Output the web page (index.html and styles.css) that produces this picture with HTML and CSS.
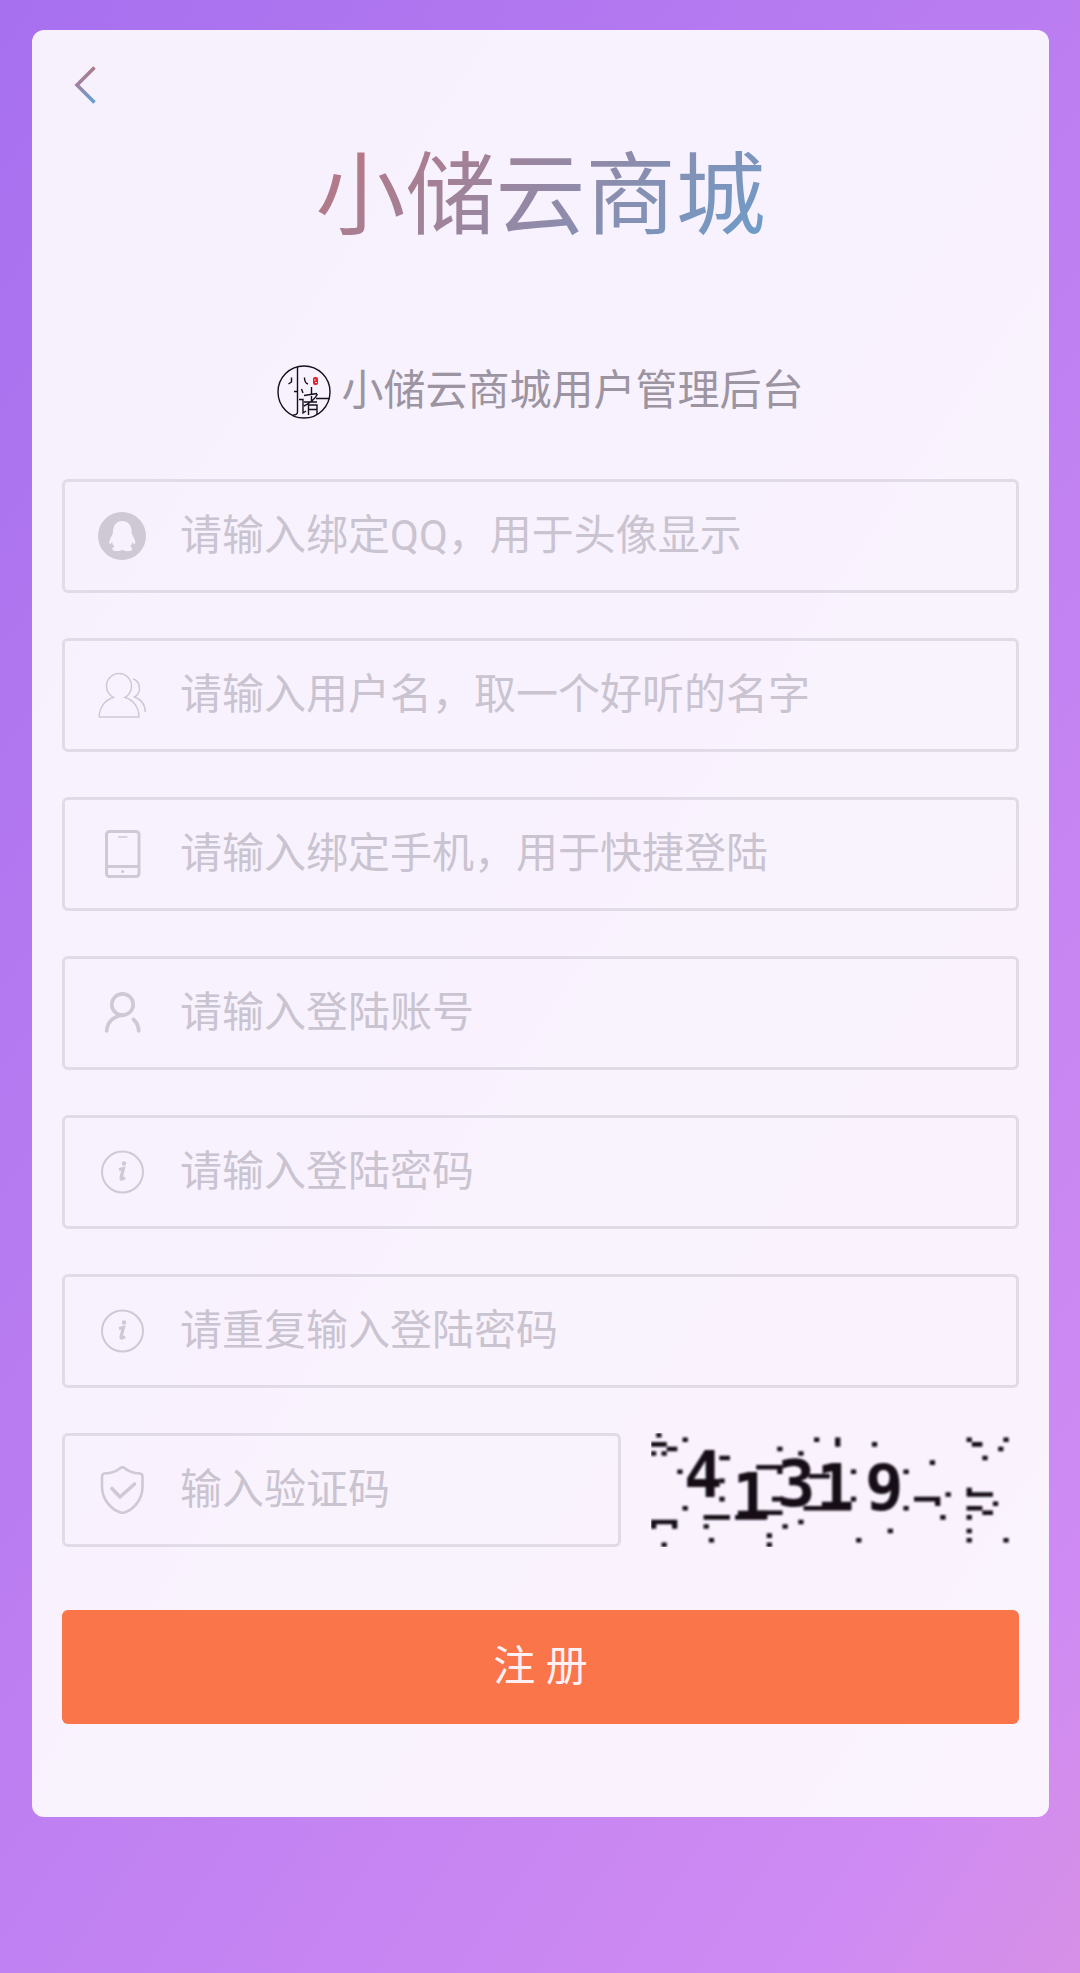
FILE: index.html
```html
<!DOCTYPE html>
<html lang="zh-CN">
<head>
    <meta charset="UTF-8">
    <meta name="viewport" content="width=device-width, initial-scale=1">
    <title>小储云商城</title>
    <link rel="stylesheet" href="styles.css">
</head>
<body>
    <div class="card">
        <a class="back" href="#" aria-label="返回">
            <svg width="24" height="40" viewBox="0 0 24 40">
                <defs>
                    <linearGradient id="backColor" x1="0" y1="0" x2="0" y2="1">
                        <stop offset="0" stop-color="#ad7a8b"/>
                        <stop offset="0.5" stop-color="#a083a0"/>
                        <stop offset="1" stop-color="#5ea2d8"/>
                    </linearGradient>
                </defs>
                <path d="M20.500 2.500L3 20L20.500 37.500" fill="none" stroke="url(#backColor)" stroke-width="3.600"/>
            </svg>
        </a>

        <h1 class="title"><span>小储云商城</span></h1>

        <div class="subtitle">
            <svg class="logo" width="54" height="54" viewBox="0 0 54 54" fill="none" stroke="#17101c" stroke-width="1.400">
                <circle cx="27" cy="27" r="26"/>
                <path d="M20.500 2V47Q20.500 50 16 50M14.500 12.500V17L11.500 19M27.500 12.500Q27.500 18 31 19M17 26.500H20.500"/>
                <path d="M24.500 24L26 28M22 34.500H26V48L29 46M27 30.500L40 28.500M34.500 22V36M27 37H40M40.500 29Q37 36 27 41M31.500 50V40H40V50M31.500 44.500H40M39 33.500H53"/>
                <rect x="36" y="12" width="5" height="8" rx="2" fill="#e0202c" stroke="none"/>
                <path d="M37 15H39M38 17.500H40" stroke="#fff" stroke-width="0.800"/>
            </svg>
            <span>小储云商城用户管理后台</span>
        </div>

        <form>
            <label class="field">
                <svg class="icon" viewBox="0 0 48 48">
                    <path fill="currentColor" fill-rule="evenodd" d="M24 0a24 24 0 1 0 0 48a24 24 0 1 0 0-48zM24.300 9c-6 0-9 4.500-9.400 10.500c0 1.500-.2 2.500-1 4c-1.800 3-2.800 5.500-2.500 8c.3 1.500 1.700.3 2.700-1.500c.3 1.800 1.200 3.500 2.400 4.800c-1.600.4-2.200 1.400-2.200 2.200c0 2.800 7.700 2.700 10 .7c2.300 2 10 2.100 10-.7c0-.8-.6-1.800-2.200-2.200c1.200-1.300 2.100-3 2.400-4.800c1 1.800 2.400 3 2.700 1.500c.3-2.500-.7-5-2.500-8c-.8-1.500-1-2.500-1-4c-.4-6-3.400-10.500-9.400-10.500z"/>
                </svg>
                <input type="text" placeholder="请输入绑定QQ，用于头像显示" aria-label="绑定QQ">
            </label>

            <label class="field">
                <svg class="icon" viewBox="0 0 48 48" fill="none" stroke="currentColor" stroke-width="1.500">
                    <path d="M15.500 26.500C11 24 8.500 20 8.500 15A12.500 12.500 0 0 1 33.500 15C33.500 20 31 24 27 26.500C36 29 41 37 41 46H1.200C1.200 37 6.500 29 15.500 26.500z"/>
                    <path d="M35 8C39 8.500 41.500 13 41.500 17.500C41.500 21 40 24 36.500 26C43 28.500 47.300 33 47.300 41"/>
                </svg>
                <input type="text" placeholder="请输入用户名，取一个好听的名字" aria-label="用户名">
            </label>

            <label class="field">
                <svg class="icon" viewBox="0 0 48 48" fill="none" stroke="currentColor" stroke-width="3">
                    <rect x="8.500" y="1.500" width="32.500" height="45" rx="3"/>
                    <path d="M8.500 36.500H41"/>
                    <path d="M20 7H29.500" stroke-width="1.500"/>
                    <circle cx="24.700" cy="41.500" r="1.600" fill="currentColor" stroke="none"/>
                </svg>
                <input type="tel" placeholder="请输入绑定手机，用于快捷登陆" aria-label="绑定手机">
            </label>

            <label class="field">
                <svg class="icon" viewBox="0 0 48 48" fill="none" stroke="currentColor" stroke-width="3.700" stroke-linecap="round">
                    <circle cx="24.500" cy="15.500" r="10.700"/>
                    <path d="M8.700 42C9 33.500 15.500 26.800 24.500 26.500M35.500 30.500C39 33.500 40.500 37 40.700 42"/>
                </svg>
                <input type="text" placeholder="请输入登陆账号" aria-label="登陆账号">
            </label>

            <label class="field">
                <svg class="icon" viewBox="0 0 48 48" fill="none" stroke="currentColor" stroke-width="2">
                    <circle cx="24.500" cy="24" r="20.500"/>
                    <circle cx="26" cy="15.500" r="2.200" fill="currentColor" stroke="none"/>
                    <path d="M21 21.500L25.500 20.500L23 30Q23 32.500 27 29.500" stroke-width="3.200"/>
                </svg>
                <input type="password" placeholder="请输入登陆密码" aria-label="登陆密码">
            </label>

            <label class="field">
                <svg class="icon" viewBox="0 0 48 48" fill="none" stroke="currentColor" stroke-width="2">
                    <circle cx="24.500" cy="24" r="20.500"/>
                    <circle cx="26" cy="15.500" r="2.200" fill="currentColor" stroke="none"/>
                    <path d="M21 21.500L25.500 20.500L23 30Q23 32.500 27 29.500" stroke-width="3.200"/>
                </svg>
                <input type="password" placeholder="请重复输入登陆密码" aria-label="重复登陆密码">
            </label>

            <div class="code-row">
                <label class="field">
                    <svg class="icon" viewBox="0 0 48 48" fill="none" stroke="currentColor" stroke-width="2.600" stroke-linejoin="round">
                        <path d="M22.500 2Q24.500 .6 26.500 2Q32 7 42 7.500Q44.500 8 44.500 10.500V21C44.500 33 36 43.500 26.500 46.500Q24.500 47 22.500 46.500C13 43.500 4 33 4 21V10.500Q4 8 6.500 7.500Q17 7 22.500 2z"/>
                        <path d="M14 22.500L22 31L36.500 18" stroke-width="3.600" stroke-linecap="round"/>
                    </svg>
                    <input type="text" placeholder="输入验证码" aria-label="验证码">
                </label>

                <!-- captcha: digits over pixel noise -->
                <svg class="captcha" viewBox="0 0 368 114" fill="#120b18">
                    <filter id="soft"><feGaussianBlur stdDeviation="0.8"/></filter>
                    <g filter="url(#soft)">
                        <path transform="scale(5.260 4.560)" d="M1 0h1v1h-1zM6 1h1v1h-1zM0 2h3v1h-3zM3 3h2v1h-2zM0 4h1v1h-1zM2 4h1v1h-1zM31 1h1v1h-1zM35 1h1v2h-1zM42 2h1v1h-1zM24 3h1v1h-1zM28 4h1v1h-1zM60 1h1v1h-1zM61 2h2v1h-2zM67 1h1v1h-1zM66 3h1v1h-1zM63 5h1v1h-1zM53 6h1v1h-1zM48 8h1v1h-1zM38 8h1v1h-1zM5 8h1v1h-1zM56 13h1v1h-1zM50 14h5v1h-5zM54 15h1v1h-1zM60 12h1v1h-1zM60 13h5v1h-5zM65 15h1v1h-1zM60 16h3v1h-3zM63 17h2v1h-2zM60 18h1v1h-1zM60 21h1v1h-1zM60 23h1v1h-1zM67 23h1v1h-1zM55 18h1v1h-1zM48 16h1v1h-1zM38 14h1v1h-1zM45 21h1v1h-1zM39 23h1v1h-1zM28 19h1v1h-1zM25 20h1v1h-1zM22 22h1v1h-1zM22 24h1v1h-1zM6 16h1v1h-1zM13 14h1v1h-1zM10 18h5v1h-5zM16 18h6v1h-6zM20 17h5v1h-5zM10 20h1v1h-1zM11 23h1v1h-1zM2 24h1v1h-1zM0 19h5v1h-5zM0 20h1v1h-1zM4 20h1v1h-1zM13 5h2v1h-2zM20 7h5v1h-5zM24 8h1v1h-1zM30 9h4v1h-4zM29 16h9v1h-9zM13 10h1v1h-1zM23 14h2v1h-2z"/>
                        <text class="digits"><tspan x="33" y="64">4</tspan><tspan x="81" y="86">1</tspan><tspan x="126" y="73">3</tspan><tspan x="165" y="77">1</tspan><tspan x="214" y="77">9</tspan></text>
                    </g>
                </svg>
            </div>

            <button class="submit" type="submit">注 册</button>
        </form>
    </div>
</body>
</html>
```

FILE: styles.css
```css
* {
    box-sizing: border-box;
}

body {
    margin: 0;
    min-height: 100vh;
    padding: 30px 31px 30px 32px;
    font-family: Roboto, "Noto Sans CJK SC", sans-serif;
    background: linear-gradient(124deg, #a770ef 0%, #cf8bf3 89%, #d690e6 100%);
}

.card {
    padding: 35px 30px 93px;
    border-radius: 12px;
    background: rgba(255, 255, 255, 0.9);
}

.back {
    display: block;
    width: 48px;
    height: 79px;
    padding-left: 12px;
}

.back svg {
    display: block;
}

.title {
    margin: 0;
    font-size: 90px;
    font-weight: 400;
    line-height: 106px;
    text-align: center;
}

.title span {
    color: transparent;
    background: linear-gradient(135deg, #bb7580, #6c9dcb);
    -webkit-background-clip: text;
    background-clip: text;
}

.subtitle {
    display: flex;
    justify-content: center;
    gap: 10px;
    margin-top: 111px;
    margin-bottom: 58px;
    color: #9c95a1;
    font-size: 42px;
    line-height: 60px;
}

.logo {
    margin-top: 4px;
}

/* form */
form {
    display: flex;
    flex-direction: column;
    gap: 45px;
}

.field {
    display: flex;
    flex: 1;
    align-items: center;
    gap: 34px;
    min-width: 0;
    height: 114px;
    padding: 0 33px;
    border: 3px solid #e1dbe7;
    border-radius: 6px;
}

form > .field {
    flex: none;
}

.icon {
    flex: none;
    width: 48px;
    height: 48px;
    color: #cfc8d5;
}

.field input {
    flex: 1;
    min-width: 0;
    height: 60px;
    padding: 0;
    border: 0;
    outline: 0;
    background: none;
    color: #635c68;
    font-family: inherit;
    font-size: 42px;
    line-height: 60px;
}

.field input::placeholder {
    color: #cac3d0;
    line-height: 60px;
    opacity: 1;
}

.code-row {
    display: flex;
    gap: 30px;
}

.captcha {
    flex: none;
    width: 368px;
    height: 114px;
}

.digits {
    font-family: "DejaVu Sans Mono", monospace;
    font-size: 64px;
    font-weight: 700;
}

.submit {
    height: 114px;
    margin-top: 18px;
    border: 0;
    border-radius: 6px;
    background: #fa754a;
    color: #fff0f4;
    font-family: inherit;
    font-size: 42px;
    line-height: 60px;
    cursor: pointer;
}
```
